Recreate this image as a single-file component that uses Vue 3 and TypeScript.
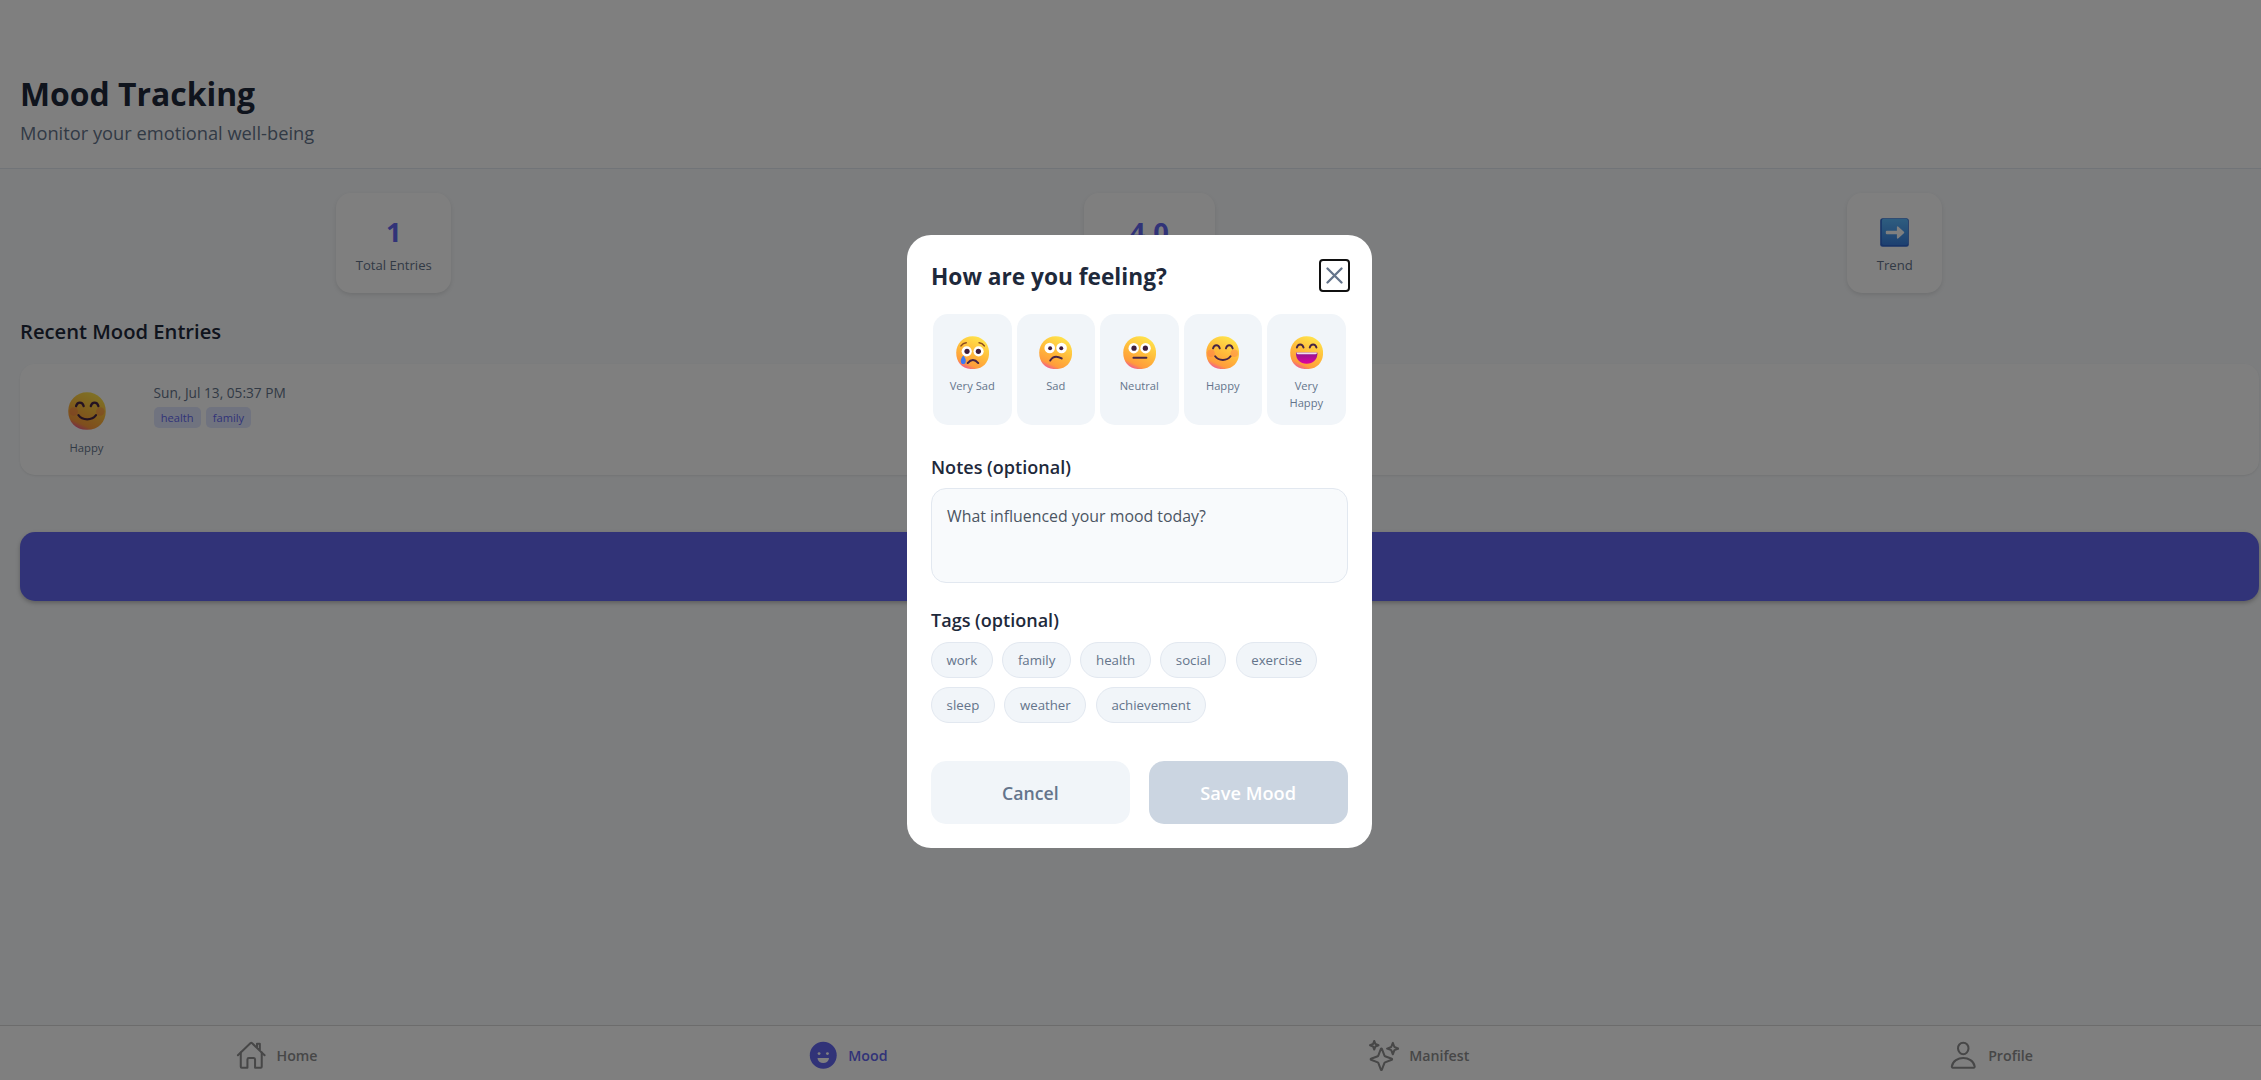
<script setup lang="ts">
import { ref } from 'vue'

interface Mood {
  id: string
  label: string
}

const moods: Mood[] = [
  { id: 'very-sad', label: 'Very Sad' },
  { id: 'sad', label: 'Sad' },
  { id: 'neutral', label: 'Neutral' },
  { id: 'happy', label: 'Happy' },
  { id: 'very-happy', label: 'Very Happy' },
]
const tags: string[] = ['work', 'family', 'health', 'social', 'exercise', 'sleep', 'weather', 'achievement']
const tabs: string[] = ['Home', 'Mood', 'Manifest', 'Profile']
const activeTab = ref('Mood')
const notes = ref('')
</script>

<template>
  <div class="viewport">
    <svg class="defs" width="0" height="0" aria-hidden="true">
      <defs>
        <linearGradient id="skin" x1="0.78" y1="0.1" x2="0.36" y2="1">
          <stop offset="0" stop-color="#ffe04a" />
          <stop offset="0.5" stop-color="#ffb93a" />
          <stop offset="0.86" stop-color="#ff9c3c" />
          <stop offset="1" stop-color="#f2608a" />
        </linearGradient>
        <linearGradient id="tile" x1="0" y1="0" x2="0" y2="1">
          <stop offset="0" stop-color="#5cbaff" />
          <stop offset="1" stop-color="#3a80e0" />
        </linearGradient>
        <linearGradient id="grin" x1="0" y1="0" x2="0" y2="1">
          <stop offset="0" stop-color="#8a1a8c" />
          <stop offset="1" stop-color="#e000a0" />
        </linearGradient>
        <symbol id="face" viewBox="0 0 32 32">
          <path d="M16 0.2C24.9 0.2 31.8 7.1 31.8 16C31.8 25.3 25.9 31.8 16 31.8C6.1 31.8 0.2 25.3 0.2 16C0.2 7.1 7.1 0.2 16 0.2Z" fill="url(#skin)" />
        </symbol>
        <symbol id="very-sad" viewBox="0 0 32 32">
          <use href="#face" />
          <circle cx="10.3" cy="14.7" r="4.9" fill="#fff" />
          <circle cx="21.7" cy="14.7" r="4.9" fill="#fff" />
          <circle cx="10.6" cy="14.7" r="2.5" fill="#3f1d3a" />
          <circle cx="21.5" cy="14.7" r="2.5" fill="#3f1d3a" />
          <path d="M4.8 9.5Q6.8 6.8 9.8 6.5M22.2 6.5Q25.2 6.8 27.2 9.5" class="brow" />
          <path d="M11.2 26Q16.3 20 21.4 26" class="ink" />
          <path d="M7 18.8C8.6 20.6 9.4 22.2 9.4 24A2.4 3 0 0 1 4.6 24C4.6 22.2 5.4 20.6 7 18.8Z" fill="#3c78f5" />
        </symbol>
        <symbol id="sad" viewBox="0 0 32 32">
          <use href="#face" />
          <circle cx="10.3" cy="11.5" r="5.1" fill="#fff" />
          <circle cx="21.7" cy="11.5" r="5.1" fill="#fff" />
          <circle cx="10.7" cy="11.8" r="1.9" fill="#3f1d3a" />
          <circle cx="21.4" cy="11.8" r="1.9" fill="#3f1d3a" />
          <path d="M10.8 23.6Q14.5 17.4 21.8 21.6" class="ink" />
        </symbol>
        <symbol id="neutral" viewBox="0 0 32 32">
          <use href="#face" />
          <circle cx="10.3" cy="11.7" r="5" fill="#fff" />
          <circle cx="21.7" cy="11.7" r="5" fill="#fff" />
          <circle cx="10.6" cy="11.7" r="2.5" fill="#3f1d3a" />
          <circle cx="21.5" cy="11.7" r="2.5" fill="#3f1d3a" />
          <path d="M10 20.9H22.5" class="ink" />
        </symbol>
        <symbol id="happy" viewBox="0 0 32 32">
          <use href="#face" />
          <circle cx="4.8" cy="16.5" r="3.6" fill="#ff6a50" opacity="0.35" />
          <circle cx="27.2" cy="16.5" r="3.6" fill="#ff6a50" opacity="0.35" />
          <path d="M6.8 11.9C7.8 7.9 12.2 7.9 13.2 11.9M19.2 11.9C20.2 7.9 24.6 7.9 25.6 11.9" class="ink" />
          <path d="M8.8 19.5C12.2 24.2 20.2 24.2 23.6 19.5" class="ink" />
        </symbol>
        <symbol id="very-happy" viewBox="0 0 32 32">
          <use href="#face" />
          <path d="M6.6 11.1C7.6 7.1 12 7.1 13 11.1M19 11.1C20 7.1 24.4 7.1 25.4 11.1" class="ink" />
          <path d="M5.7 16.3Q5.7 15.8 6.2 15.8H25.9Q26.4 15.8 26.4 16.3C26.4 22.5 22.3 26.7 16 26.7S5.7 22.5 5.7 16.3Z" fill="url(#grin)" />
          <path d="M6.3 15.8H25.8V16.3Q25.8 17.5 24.4 17.5H7.7Q6.3 17.5 6.3 16.3Z" fill="#fff" opacity="0.85" />
        </symbol>
      </defs>
    </svg>

    <div class="app">
      <header class="header">
        <h1>Mood Tracking</h1>
        <p>Monitor your emotional well-being</p>
      </header>

      <main class="main">
        <section class="stats">
          <div class="stat total">
            <strong>1</strong>
            <span>Total Entries</span>
          </div>
          <div class="stat average">
            <strong>4.0</strong>
          </div>
          <div class="stat trend">
            <strong>
              <svg width="29" height="29" viewBox="0 0 29 29">
                <rect x="0.2" y="0.2" width="28.6" height="28.6" rx="2.5" fill="#2f68d0" />
                <rect x="1.8" y="0.8" width="26.2" height="26.2" rx="2" fill="url(#tile)" />
                <path d="M6.8 12.8H16.9V9.3Q17.1 7.7 18.4 8.7L23.9 13.7Q24.7 14.5 23.9 15.3L18.4 20.3Q17.1 21.3 16.9 19.7V16.2H6.8Q5.8 16.2 5.8 15.2V13.8Q5.8 12.8 6.8 12.8Z" fill="#fff" />
              </svg>
            </strong>
            <span>Trend</span>
          </div>
        </section>

        <h2>Recent Mood Entries</h2>

        <article class="entry">
          <div class="entry-mood">
            <svg width="38" height="38"><use href="#happy" /></svg>
            <span>Happy</span>
          </div>
          <div class="entry-body">
            <time>Sun, Jul 13, 05:37 PM</time>
            <div class="entry-tags">
              <span>health</span>
              <span>family</span>
            </div>
          </div>
        </article>

        <button class="add" type="button" aria-label="Log mood"></button>
      </main>

      <nav class="tabs">
        <a v-for="tab in tabs" :key="tab" :class="{ active: tab === activeTab }" @click="activeTab = tab">
          <svg width="30.5" height="30.5" viewBox="0 0 512 512">
            <g v-if="tab === 'Home'" class="line">
              <path d="M80 212v236a16 16 0 0 0 16 16h96V328a24 24 0 0 1 24-24h80a24 24 0 0 1 24 24v136h96a16 16 0 0 0 16-16V212" />
              <path d="M480 256L266.89 52c-5-5.28-16.69-5.34-21.78 0L32 256M400 179V64h-48v69" />
            </g>
            <g v-else-if="tab === 'Mood'">
              <circle cx="256" cy="256" r="226" fill="currentColor" />
              <circle cx="186" cy="228" r="24" fill="#fff" />
              <circle cx="326" cy="228" r="24" fill="#fff" />
              <path d="M168 304H344Q354 304 352 315C342 358 303 388 256 388S170 358 160 315Q158 304 168 304Z" fill="#fff" />
            </g>
            <g v-else-if="tab === 'Manifest'" class="line">
              <path d="M259.92 262.91L216.4 149.77a9 9 0 0 0-16.8 0l-43.52 113.14a16 16 0 0 1-9.17 9.17L33.77 315.6a9 9 0 0 0 0 16.8l113.14 43.52a16 16 0 0 1 9.17 9.17l43.52 113.14a9 9 0 0 0 16.8 0l43.52-113.14a16 16 0 0 1 9.17-9.17l113.14-43.52a9 9 0 0 0 0-16.8l-113.14-43.52a16 16 0 0 1-9.17-9.17z" />
              <path d="M108 68L88 16 68 68 16 88l52 20 20 52 20-52 52-20-52-20zM426.67 117.33L400 48l-26.67 69.33L304 144l69.33 26.67L400 240l26.67-69.33L496 144l-69.33-26.67z" />
            </g>
            <g v-else class="line">
              <path d="M344 144c-3.92 52.87-44 96-88 96s-84.15-43.12-88-96c-4-55 35-96 88-96s92 42 88 96z" />
              <path d="M256 304c-87 0-175.3 48-191.64 138.6C62.39 453.52 68.57 464 80 464h352c11.44 0 17.62-10.48 15.65-21.4C431.3 352 343 304 256 304z" />
            </g>
          </svg>
          <span>{{ tab }}</span>
        </a>
      </nav>

      <div class="overlay">
        <div class="modal" role="dialog" aria-modal="true">
          <div class="modal-head">
            <h3>How are you feeling?</h3>
            <button class="close" type="button" aria-label="Close">
              <svg width="17" height="17" viewBox="0 0 17 17"><path d="M1.5 1.5L15.5 15.5M15.5 1.5L1.5 15.5" /></svg>
            </button>
          </div>

          <div class="moods">
            <button v-for="mood in moods" :key="mood.id" class="mood" type="button">
              <svg width="33.3" height="33.3"><use :href="`#${mood.id}`" /></svg>
              <span>{{ mood.label }}</span>
            </button>
          </div>

          <label class="field-label notes-label" for="notes">Notes (optional)</label>
          <textarea id="notes" v-model="notes" placeholder="What influenced your mood today?"></textarea>

          <div class="field-label tags-label">Tags (optional)</div>
          <div class="chips">
            <button v-for="tag in tags" :key="tag" class="chip" type="button">{{ tag }}</button>
          </div>

          <div class="actions">
            <button class="cancel" type="button">Cancel</button>
            <button class="save" type="button">Save Mood</button>
          </div>
        </div>
      </div>
    </div>
  </div>
</template>

<style>
body {
  overflow: hidden;
}
</style>

<style scoped>
.viewport {
  width: 100%;
  height: 100vh;
  overflow: hidden;
  font-family: "Open Sans", "Noto Sans", sans-serif;
}
.defs {
  position: absolute;
}
.app {
  position: relative;
  width: calc(100% + 17.5px);
  height: 100%;
  display: flex;
  flex-direction: column;
  background: #f8fafc;
}
.app * {
  box-sizing: border-box;
}
svg {
  display: block;
  flex: none;
}
.ink,
.brow {
  fill: none;
  stroke: #472545;
  stroke-width: 1.9;
  stroke-linecap: round;
}
.brow {
  stroke: #8a4a20;
  stroke-width: 1.5;
}
button {
  margin: 0;
  padding: 0;
  border: 0;
  font-family: inherit;
}
h1,
h2,
h3,
p {
  margin: 0;
}
.header {
  padding: 72px 20px 23.5px;
  background: #fff;
  border-bottom: 1px solid #e2e8f0;
}
h1 {
  font-size: 31.9px;
  line-height: 44px;
  font-weight: 700;
  color: #1e293b;
}
.header p {
  margin-top: 4.5px;
  font-size: 18.27px;
  line-height: 24px;
  color: #64748b;
}
.main {
  flex: 1;
  padding: 24px 20px 0;
}
.stats {
  display: flex;
  justify-content: space-around;
}
.stat {
  display: flex;
  flex-direction: column;
  align-items: center;
  height: 100px;
  padding-top: 20px;
  border-radius: 15px;
  background: #fff;
  box-shadow: 0 2px 4px rgba(0, 0, 0, 0.1);
}
.total {
  width: 115px;
}
.average {
  width: 131px;
}
.trend {
  width: 95px;
}
.stat strong {
  height: 38px;
  font-size: 27.3px;
  line-height: 38px;
  font-weight: 700;
  color: #6366f1;
}
.stat strong svg {
  margin-top: 5px;
}
.stat span {
  margin-top: 5px;
  font-size: 13.1px;
  line-height: 18px;
  color: #64748b;
  white-space: nowrap;
}
h2 {
  margin-top: 24.4px;
  font-size: 20.2px;
  line-height: 28px;
  font-weight: 600;
  color: #1e293b;
}
.entry {
  display: flex;
  gap: 19.5px;
  height: 110.5px;
  margin-top: 19.1px;
  padding: 19px;
  border-radius: 15px;
  background: #fff;
  box-shadow: 0 1px 2px rgba(0, 0, 0, 0.08);
}
.entry-mood {
  display: flex;
  flex-direction: column;
  align-items: center;
  width: 95px;
  padding-top: 9px;
}
.entry-mood span {
  margin-top: 9.6px;
  font-size: 11.27px;
  line-height: 16px;
  color: #64748b;
}
.entry-body time {
  display: block;
  font-size: 13.7px;
  line-height: 20px;
  color: #64748b;
}
.entry-tags {
  display: flex;
  gap: 5px;
  margin-top: 3.5px;
}
.entry-tags span {
  padding: 0 7.2px;
  border-radius: 5px;
  background: #e0e7ff;
  font-size: 11.1px;
  line-height: 21.5px;
  color: #6366f1;
}
.add {
  display: block;
  width: 100%;
  height: 69.5px;
  margin-top: 57px;
  border-radius: 15px;
  background: #6366f1;
  box-shadow: 0 2px 4px rgba(0, 0, 0, 0.25);
}
.tabs {
  display: flex;
  height: 55px;
  padding-top: 5px;
  background: #fff;
  border-top: 1px solid #d8d8d8;
}
.tabs a {
  display: flex;
  align-items: center;
  justify-content: center;
  gap: 10px;
  flex: 0 0 571.3px;
  color: #8e8e8f;
  font-size: 14.2px;
  font-weight: 600;
}
.tabs a:first-child {
  flex-basis: 562px;
  padding-right: 8.5px;
}
.tabs a.active {
  color: #6366f1;
}
.line {
  fill: none;
  stroke: currentColor;
  stroke-width: 34;
  stroke-linecap: round;
  stroke-linejoin: round;
}
.overlay {
  position: absolute;
  inset: 0;
  display: flex;
  align-items: center;
  justify-content: center;
  background: rgba(0, 0, 0, 0.5);
}
.modal {
  width: 464.5px;
  height: 613px;
  margin-top: 2.6px;
  padding: 24px;
  border-radius: 24px;
  background: #fff;
}
.modal-head {
  display: flex;
  align-items: center;
  justify-content: space-between;
  height: 33.5px;
}
h3 {
  margin-top: 2px;
  font-size: 22.7px;
  line-height: 30px;
  font-weight: 700;
  color: #1e293b;
}
.close {
  display: flex;
  align-items: center;
  justify-content: center;
  width: 27px;
  height: 29px;
  border-radius: 2px;
  background: none;
  outline: 2px solid #101010;
}
.close path {
  stroke: #64748b;
  stroke-width: 2.3;
  stroke-linecap: round;
}
.moods {
  display: flex;
  gap: 5px;
  margin-top: 21.6px;
  padding: 0 2px;
}
.mood {
  flex: 1 1 0;
  display: flex;
  flex-direction: column;
  align-items: center;
  justify-content: flex-start;
  height: 111px;
  padding: 22px 12px 0;
  border-radius: 15px;
  background: #f1f5f9;
}
.mood span {
  margin: 9px -4px 0;
  padding: 0 5px;
  font-size: 11.15px;
  line-height: 16.8px;
  color: #64748b;
}
.field-label {
  display: block;
  font-size: 18.05px;
  line-height: 24px;
  font-weight: 600;
  color: #1e293b;
}
.notes-label {
  margin-top: 30px;
}
.tags-label {
  margin-top: 25px;
}
textarea {
  display: block;
  width: 100%;
  height: 95.5px;
  margin: 9px 0 0;
  padding: 15.8px 15px;
  border: 1px solid #e2e8f0;
  border-radius: 15px;
  outline: none;
  resize: none;
  background: #f8fafc;
  font-family: inherit;
  font-size: 15.88px;
  line-height: 22px;
  color: #1e293b;
}
textarea::placeholder {
  color: #4b5563;
  opacity: 1;
}
.chips {
  display: flex;
  flex-wrap: wrap;
  gap: 9px 9.5px;
  margin-top: 9.4px;
}
.chip {
  height: 36px;
  padding: 0 14.6px;
  border: 1px solid #e2e8f0;
  border-radius: 18px;
  background: #f1f5f9;
  font-size: 13.25px;
  color: #64748b;
}
.actions {
  display: flex;
  gap: 19px;
  margin-top: 38px;
}
.actions button {
  flex: 1 1 0;
  height: 63px;
  padding-top: 1px;
  border-radius: 15px;
  font-weight: 600;
}
.cancel {
  background: #f1f5f9;
  font-size: 17.7px;
  color: #64748b;
}
.save {
  background: #cbd5e1;
  font-size: 18.2px;
  color: #fff;
}
</style>
